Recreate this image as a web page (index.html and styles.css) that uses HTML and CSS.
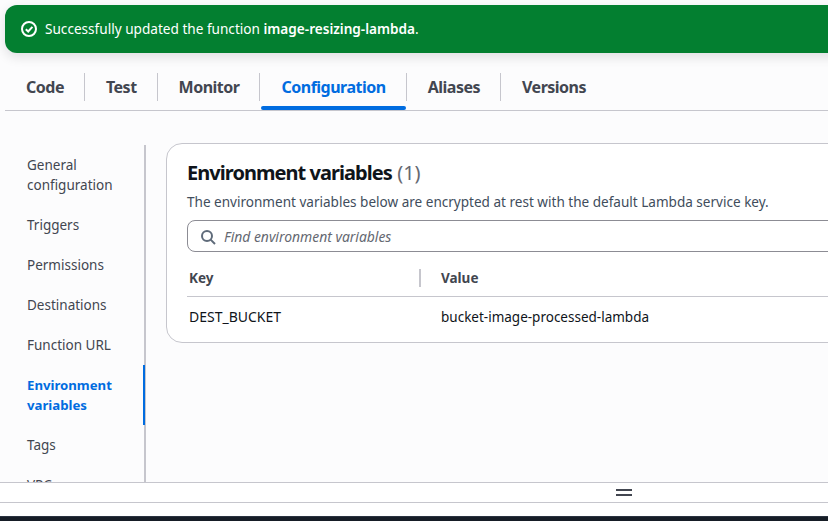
FILE: index.html
```html
<!DOCTYPE html>
<html lang="en">
<head>
<meta charset="utf-8">
<title>Environment variables</title>
<link rel="stylesheet" href="styles.css">
</head>
<body>
<div class="main">
  <div class="flash">
    <svg class="flash-icon" width="16" height="16" viewBox="0 0 16 16"><circle cx="8" cy="8" r="7" fill="none" stroke="#fff" stroke-width="2"/><path d="M4.8 8.2 7.2 10.5 11.4 5.8" fill="none" stroke="#fff" stroke-width="2"/></svg>
    <span>Successfully updated the function <b>image-resizing-lambda</b>.</span>
  </div>
  <div class="tabs">
    <div class="tab">Code</div>
    <div class="tab">Test</div>
    <div class="tab">Monitor</div>
    <div class="tab active">Configuration</div>
    <div class="tab">Aliases</div>
    <div class="tab">Versions</div>
  </div>
  <div class="content">
    <nav class="side">
      <a>General configuration</a>
      <a>Triggers</a>
      <a>Permissions</a>
      <a>Destinations</a>
      <a>Function URL</a>
      <a class="current">Environment variables</a>
      <a>Tags</a>
      <a>VPC</a>
    </nav>
    <section class="card">
      <h2>Environment variables <span class="count">(1)</span></h2>
      <p class="desc">The environment variables below are encrypted at rest with the default Lambda service key.</p>
      <div class="search">
        <svg width="16" height="16" viewBox="0 0 16 16"><circle cx="7" cy="7" r="5" fill="none" stroke="#5f6b7a" stroke-width="2"/><path d="M10.6 10.6 15 15" fill="none" stroke="#5f6b7a" stroke-width="2"/></svg>
        <span>Find environment variables</span>
      </div>
      <div class="row head">
        <div class="key">Key</div>
        <div class="val">Value</div>
      </div>
      <div class="row body-row">
        <div class="key">DEST_BUCKET</div>
        <div class="val">bucket-image-processed-lambda</div>
      </div>
    </section>
  </div>
</div>
<div class="handle-bar"><span class="handle"></span></div>
<div class="dark"></div>
</body>
</html>
```
FILE: styles.css
```css
* { box-sizing: border-box; }
html, body { margin: 0; height: 100%; overflow: hidden; }
body {
  width: 828px; height: 521px;
  display: flex; flex-direction: column;
  background: #fff;
  font-family: "Noto Sans", sans-serif;
  font-size: 14px; line-height: 20px; color: #414d5c;
}
.main {
  height: 482px; flex: none; overflow: hidden;
  background: #fcfcfd;
  padding: 5px 0 0 5px;
}
.flash {
  width: 900px; height: 48px;
  background: #037f30;
  border-radius: 12px;
  color: #fff;
  display: flex; align-items: center; gap: 8px;
  padding-left: 16px;
  box-shadow: 0 4px 12px rgba(0, 7, 22, .12);
  font-size: 13.6px;
}
.flash b { font-weight: 600; }
.flash-icon { flex: none; }
.tabs {
  margin: 20px 0 0;
  height: 38px;
  display: flex; align-items: flex-start;
  border-bottom: 1px solid #c6c6cd;
  width: 823px;
}
.tab {
  height: 28px;
  padding: 0 20px 0 21px;
  font-size: 16px; font-weight: 700; line-height: 28px;
  letter-spacing: -0.5px;
  color: #424650;
  border-left: 1px solid #c6c6cd;
  position: relative;
}
.tab:first-child { border-left: 0; padding-left: 21px; }
.tab.active { color: #006ce0; }
.tab.active::after {
  content: ""; position: absolute; left: 1px; right: 0; top: 33px;
  height: 4px; border-radius: 2px; background: #006ce0;
}
.content { display: flex; margin-top: 32px; }
.side {
  width: 141px; flex: none;
  margin-top: 2px;
  border-right: 2px solid #c6c6cd;
  padding: 10px 20px 0 22px;
  display: flex; flex-direction: column; gap: 20px;
  height: 340px;
  font-size: 13.5px;
}
.side a { display: block; color: #424650; }
.side a.current {
  color: #006ce0; font-weight: 700; font-size: 13.2px; position: relative;
}
.side a.current::after {
  content: ""; position: absolute; right: -21px; top: -10px; bottom: -10px;
  width: 2px; background: #006ce0;
}
.card {
  flex: none;
  margin-left: 20px;
  width: 800px; height: 200px;
  background: #fff;
  border: 1px solid #c6c6cd;
  border-radius: 16px;
  padding: 15px 20px 0;
}
h2 {
  margin: 0; font-size: 20px; line-height: 28px; font-weight: 700; color: #0f141a;
  letter-spacing: -0.95px;
}
.count { font-weight: 400; color: #656871; letter-spacing: 0; margin-left: 1px; }
.desc { margin: 5px 0 0; font-size: 13.56px; line-height: 20px; white-space: nowrap; }
.search {
  margin-top: 8px; height: 32px;
  border: 1px solid #8c8c94; border-radius: 8px;
  display: flex; align-items: center; gap: 8px;
  padding: 1px 0 0 12px;
  font-size: 13.9px; font-style: italic; color: #656871;
}
.row { display: flex; font-size: 13.5px; padding-left: 2px; }
.row .key { width: 252px; }
.head {
  height: 45px; padding-top: 8px; align-items: center; font-weight: 700;
  border-bottom: 1px solid #c6c6cd; color: #424650;
}
.head .key { position: relative; }
.head .key::after {
  content: ""; position: absolute; right: 20px; top: 1px; height: 18px; width: 2px; background: #c6c6cd;
}
.body-row { height: 40px; align-items: center; color: #0f141a; }
.body-row .key { font-size: 14px; }
.handle-bar {
  height: 21px; flex: none;
  border-top: 1px solid #c6c6cd; border-bottom: 1px solid #c6c6cd;
  background: #fff;
  padding: 6px 0 0 616px;
}
.handle {
  display: block; width: 16px; height: 7px;
  border-top: 2px solid #424650; border-bottom: 2px solid #424650;
}
.dark { height: 18px; flex: none; margin-top: 13px; background: #161d26; border-top: 1px solid #2a3340; }
```
